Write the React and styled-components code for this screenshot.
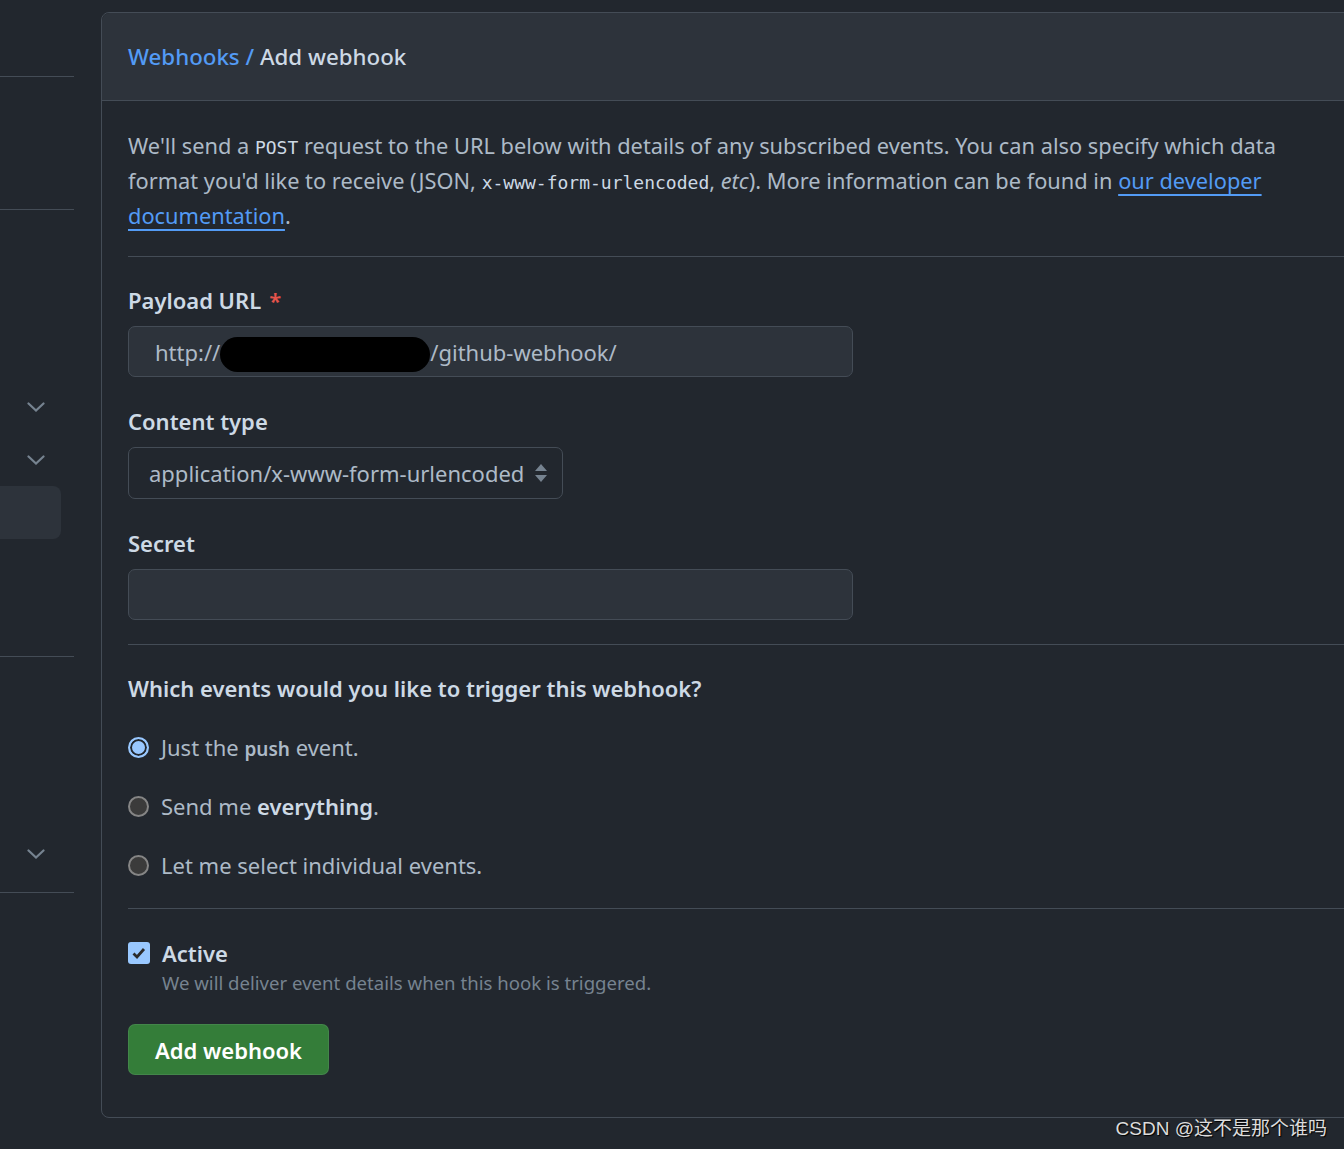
import React from 'react';
import styled, { createGlobalStyle } from 'styled-components';

const GlobalStyle = createGlobalStyle`
  html, body {
    margin: 0;
    padding: 0;
    background: #22272e;
    overflow: hidden;
  }
  body {
    font-family: "Noto Sans", "Open Sans", sans-serif;
    color: #adbac7;
  }
`;

const Page = styled.div`
  position: relative;
  width: 1344px;
  height: 1149px;
  display: flex;
  align-items: flex-start;
  gap: 27px;
  padding-top: 12px;
  box-sizing: border-box;
  overflow: hidden;
`;

const Sidebar = styled.nav`
  flex: 0 0 74px;
  display: flex;
  flex-direction: column;
  margin-top: -12px;
`;

const SideSpace = styled.div`
  height: ${p => p.h}px;
`;

const SideDivider = styled.div`
  height: 1px;
  background: #444c56;
`;

const SideRow = styled.div`
  height: 53px;
  display: flex;
  align-items: center;
  padding-left: 27px;
  box-sizing: border-box;
  border-radius: 0 8px 8px 0;
  margin-right: ${p => (p.active ? '13px' : '0')};
  background: ${p => (p.active ? '#2d333b' : 'transparent')};
`;

const Box = styled.section`
  flex: 0 0 1290px;
  border: 1px solid #444c56;
  border-radius: 8px;
  box-sizing: border-box;
`;

const BoxHeader = styled.header`
  height: 88px;
  background: #2d333b;
  border-bottom: 1px solid #444c56;
  border-radius: 8px 8px 0 0;
  display: flex;
  align-items: center;
  padding-left: 26px;
  box-sizing: border-box;
`;

const Title = styled.h2`
  margin: 0;
  font-size: 22.3px;
  font-weight: 500;
  color: #cdd9e5;
`;

const Crumb = styled.a`
  color: #539bf5;
  text-decoration: none;
`;

const BoxBody = styled.div`
  padding: 27px 0 42px 26px;
`;

const Intro = styled.p`
  margin: 0;
  width: 1160px;
  font-size: 21.8px;
  line-height: 35px;
  color: #adbac7;
`;

const Code = styled.code`
  font-family: "DejaVu Sans Mono", "Liberation Mono", monospace;
  font-size: 18px;
  line-height: 1;
  color: #cdd9e5;
`;

const Link = styled.a`
  color: #539bf5;
  text-decoration: underline;
  text-underline-offset: 5px;
  text-decoration-thickness: 2px;
`;

const Divider = styled.hr`
  border: 0;
  height: 1px;
  background: #444c56;
  margin: ${p => p.m};
`;

const Field = styled.div`
  display: flex;
  flex-direction: column;
  gap: 11px;
  margin-top: ${p => p.top}px;
`;

const Label = styled.label`
  font-size: 22px;
  line-height: 30px;
  font-weight: 600;
  color: #cdd9e5;
`;

const Required = styled.span`
  color: #e5534b;
  margin-left: 8px;
`;

const TextInput = styled.div`
  width: 725px;
  height: 51px;
  box-sizing: border-box;
  background: #2d333b;
  border: 1px solid #444c56;
  border-radius: 7px;
  display: flex;
  align-items: center;
  padding-left: 26px;
  font-size: 22px;
  color: #adbac7;
`;

const Redacted = styled.span`
  display: inline-block;
  width: 210px;
  height: 35px;
  background: #000;
  border-radius: 18px;
  margin-top: 5px;
`;

const Select = styled.div`
  width: 435px;
  height: 52px;
  box-sizing: border-box;
  border: 1px solid #444c56;
  border-radius: 7px;
  display: flex;
  align-items: center;
  justify-content: space-between;
  padding: 0 14px 0 20px;
  font-size: 22px;
  color: #adbac7;
`;

const Question = styled.h3`
  margin: 0;
  font-size: 22px;
  line-height: 30px;
  font-weight: 600;
  color: #cdd9e5;
`;

const RadioList = styled.div`
  display: flex;
  flex-direction: column;
  gap: 29px;
  margin-top: 29px;
`;

const RadioRow = styled.label`
  height: 30px;
  display: flex;
  align-items: center;
  gap: 12px;
  font-size: 22px;
  line-height: 30px;
  color: #adbac7;
`;

const RadioDot = styled.span`
  width: 21px;
  height: 21px;
  box-sizing: border-box;
  border-radius: 50%;
  border: 2px solid ${p => (p.checked ? '#99c8ff' : '#858585')};
  background: ${p => (p.checked ? '#99c8ff' : '#3b3b3b')};
  box-shadow: ${p => (p.checked ? 'inset 0 0 0 2px #22272e' : 'none')};
  flex-shrink: 0;
`;

const Push = styled.span`
  font-size: 19px;
  font-weight: 600;
  line-height: 1;
  color: #adbac7;
`;

const Strong = styled.strong`
  font-weight: 600;
  color: #cdd9e5;
`;

const CheckRow = styled.div`
  display: grid;
  grid-template-columns: 22px 1fr;
  column-gap: 12px;
  margin-top: 29px;
`;

const CheckBox = styled.span`
  width: 22px;
  height: 22px;
  border-radius: 3px;
  background: #99c8ff;
  display: flex;
  align-items: center;
  justify-content: center;
  align-self: center;
`;

const CheckLabel = styled.span`
  font-size: 22px;
  line-height: 30px;
  font-weight: 600;
  color: #cdd9e5;
`;

const Note = styled.span`
  grid-column: 2;
  font-size: 18.6px;
  line-height: 30px;
  color: #768390;
`;

const Button = styled.button`
  margin-top: 26px;
  width: 201px;
  height: 51px;
  border: 1px solid rgba(205, 217, 229, 0.1);
  border-radius: 7px;
  background: #347d39;
  color: #fff;
  font-family: inherit;
  font-size: 22px;
  font-weight: 600;
  cursor: pointer;
`;

const Watermark = styled.div`
  position: absolute;
  right: 17px;
  bottom: 9px;
  font-family: "Liberation Sans", "Noto Sans CJK SC", sans-serif;
  font-size: 19px;
  color: #dcdcdc;
  text-shadow: 1px 1px 1px #000;
`;

const Chevron = () => (
  <svg width="18" height="10" viewBox="0 0 18 10">
    <path d="M1.5 1.5l7.5 7 7.5-7" fill="none" stroke="#768390" strokeWidth="2.2" strokeLinecap="round" />
  </svg>
);

const SortArrows = () => (
  <svg width="14" height="20" viewBox="0 0 14 20">
    <path d="M7 1l6 7H1z" fill="#768390" />
    <path d="M7 19l6-7H1z" fill="#768390" />
  </svg>
);

const Tick = () => (
  <svg width="16" height="16" viewBox="0 0 16 16">
    <path d="M2.5 8.5l3.5 3.5 7-8" fill="none" stroke="#2b2b2b" strokeWidth="2.8" />
  </svg>
);

const events = [
  { id: 'push', checked: true, label: <>Just the <Push>push</Push> event.</> },
  { id: 'all', label: <>Send me <Strong>everything</Strong>.</> },
  { id: 'select', label: <>Let me select individual events.</> },
];

export default function App() {
  return (
    <>
      <GlobalStyle />
      <Page>
        <Sidebar>
          <SideSpace h={76} />
          <SideDivider />
          <SideSpace h={132} />
          <SideDivider />
          <SideSpace h={170} />
          <SideRow><Chevron /></SideRow>
          <SideRow><Chevron /></SideRow>
          <SideRow active />
          <SideSpace h={117} />
          <SideDivider />
          <SideSpace h={170} />
          <SideRow><Chevron /></SideRow>
          <SideSpace h={12} />
          <SideDivider />
        </Sidebar>

        <Box>
          <BoxHeader>
            <Title><Crumb href="#">Webhooks</Crumb> <Crumb as="span">/</Crumb> Add webhook</Title>
          </BoxHeader>
          <BoxBody>
            <Intro>
              We'll send a <Code>POST</Code> request to the URL below with details of any subscribed events. You can also
              specify which data format you'd like to receive (JSON, <Code>x-www-form-urlencoded</Code>, <em>etc</em>).
              More information can be found in <Link href="#">our developer documentation</Link>.
            </Intro>
            <Divider m="23px 0 0" />

            <Field top={28}>
              <Label>Payload URL<Required>*</Required></Label>
              <TextInput>http://<Redacted />/github-webhook/</TextInput>
            </Field>
            <Field top={29}>
              <Label>Content type</Label>
              <Select>application/x-www-form-urlencoded<SortArrows /></Select>
            </Field>
            <Field top={29}>
              <Label>Secret</Label>
              <TextInput />
            </Field>
            <Divider m="24px 0 28px" />

            <Question>Which events would you like to trigger this webhook?</Question>
            <RadioList>
              {events.map(e => (
                <RadioRow key={e.id}>
                  <RadioDot checked={e.checked} />
                  <span>{e.label}</span>
                </RadioRow>
              ))}
            </RadioList>
            <Divider m="28px 0 0" />

            <CheckRow>
              <CheckBox><Tick /></CheckBox>
              <CheckLabel>Active</CheckLabel>
              <Note>We will deliver event details when this hook is triggered.</Note>
            </CheckRow>
            <Button>Add webhook</Button>
          </BoxBody>
        </Box>
        <Watermark>CSDN @这不是那个谁吗</Watermark>
      </Page>
    </>
  );
}
